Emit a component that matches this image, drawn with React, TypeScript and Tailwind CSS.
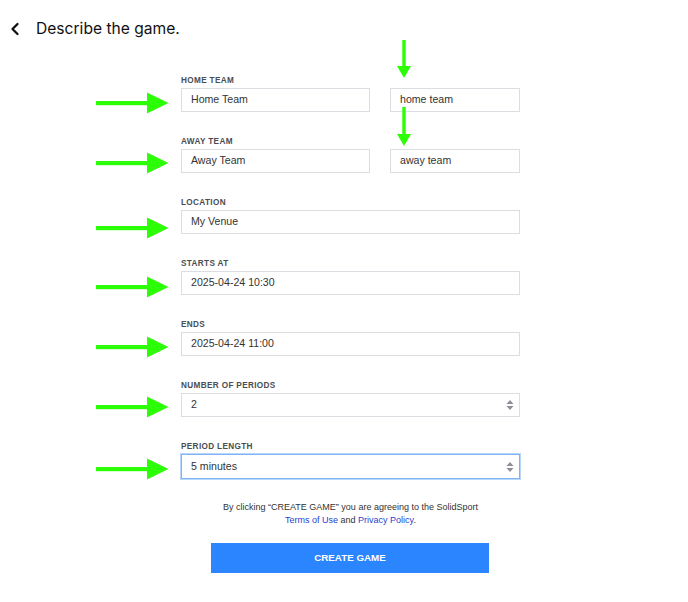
import React from "react";

const GREEN = "#2cff05";

function RightArrow({ top }: { top: number }) {
  return (
    <svg
      className="absolute"
      style={{ left: 96, top: top - 11 }}
      width="73"
      height="22"
      viewBox="0 0 73 22"
    >
      <rect x="0" y="9" width="53" height="4.2" fill={GREEN} />
      <polygon points="51,0.5 72.5,11 51,21.5" fill={GREEN} />
    </svg>
  );
}

function DownArrow({ top, shaft }: { top: number; shaft: number }) {
  return (
    <svg
      className="absolute"
      style={{ left: 396.5, top }}
      width="14"
      height={shaft + 12}
      viewBox={`0 0 14 ${shaft + 12}`}
    >
      <rect x="5.3" y="0" width="3.4" height={shaft + 1} fill={GREEN} />
      <polygon points={`0,${shaft} 14,${shaft} 7,${shaft + 12}`} fill={GREEN} />
    </svg>
  );
}

function Label({ children }: { children: React.ReactNode }) {
  return (
    <div className="h-[12px] leading-[15px] text-[8.2px] font-bold tracking-[0.35px] text-[#4a4d52] uppercase">
      {children}
    </div>
  );
}

function Field({
  value,
  className = "",
  focused = false,
  spinner = false,
}: {
  value: string;
  className?: string;
  focused?: boolean;
  spinner?: boolean;
}) {
  return (
    <div
      className={
        "h-[24px] flex items-center justify-between pl-[9px] pr-[5px] bg-white text-[10.6px] text-[#333] " +
        (focused
          ? "border border-[#7fb3f5] shadow-[0_0_0_1px_#b9d6fb] "
          : "border border-[#dadde2] ") +
        className
      }
    >
      <span>{value}</span>
      {spinner && (
        <svg width="8" height="12" viewBox="0 0 8 12">
          <polygon points="4,1 7.5,5 0.5,5" fill="#8c8f94" />
          <polygon points="0.5,7 7.5,7 4,11" fill="#8c8f94" />
        </svg>
      )}
    </div>
  );
}

export default function App() {
  return (
    <div
      className="relative w-[688px] min-h-[602px] bg-white"
      style={{ fontFamily: "'Liberation Sans', Arial, sans-serif" }}
    >
      <div className="flex items-center pt-[19px] h-[39px]">
        <svg className="ml-[10px]" width="10" height="14" viewBox="0 0 10 14">
          <polyline
            points="7.5,2 2.5,7 7.5,12"
            fill="none"
            stroke="#111"
            strokeWidth="2.3"
            strokeLinecap="round"
            strokeLinejoin="round"
          />
        </svg>
        <div
          className="ml-[16px] text-[15.6px] leading-[20px] text-[#111]"
          style={{ fontFamily: "Inter, 'Liberation Sans', sans-serif" }}
        >
          Describe the game.
        </div>
      </div>

      <div className="ml-[181px] w-[339px] mt-[34px] flex flex-col gap-[22px]">
        <div className="flex flex-col">
          <Label>Home Team</Label>
          <div className="mt-[3px] flex gap-[20px]">
            <Field value="Home Team" className="w-[189px]" />
            <Field value="home team" className="w-[130px]" />
          </div>
        </div>
        <div className="flex flex-col">
          <Label>Away Team</Label>
          <div className="mt-[3px] flex gap-[20px]">
            <Field value="Away Team" className="w-[189px]" />
            <Field value="away team" className="w-[130px]" />
          </div>
        </div>
        <div className="flex flex-col">
          <Label>Location</Label>
          <Field value="My Venue" className="mt-[3px]" />
        </div>
        <div className="flex flex-col">
          <Label>Starts At</Label>
          <Field value="2025-04-24 10:30" className="mt-[3px]" />
        </div>
        <div className="flex flex-col">
          <Label>Ends</Label>
          <Field value="2025-04-24 11:00" className="mt-[3px]" />
        </div>
        <div className="flex flex-col">
          <Label>Number of Periods</Label>
          <Field value="2" className="mt-[3px]" spinner />
        </div>
        <div className="flex flex-col">
          <Label>Period Length</Label>
          <Field value="5 minutes" className="mt-[3px] h-[25px]" spinner focused />
        </div>
      </div>

      <div className="ml-[181px] w-[339px] mt-[22px] text-center text-[9px] leading-[13px] text-[#333]">
        <div>By clicking “CREATE GAME” you are agreeing to the SolidSport</div>
        <div>
          <span className="text-[#1f3fd1]">Terms of Use</span> and{" "}
          <span className="text-[#1f3fd1]">Privacy Policy</span>.
        </div>
      </div>

      <div className="ml-[211px] w-[278px] mt-[16px] h-[30px] bg-[#2a85ff] flex items-center justify-center text-white text-[9.8px] font-bold">
        CREATE GAME
      </div>

      <RightArrow top={103} />
      <RightArrow top={163} />
      <RightArrow top={228} />
      <RightArrow top={287} />
      <RightArrow top={347} />
      <RightArrow top={407} />
      <RightArrow top={469} />
      <DownArrow top={40} shaft={26} />
      <DownArrow top={107} shaft={27} />
    </div>
  );
}
